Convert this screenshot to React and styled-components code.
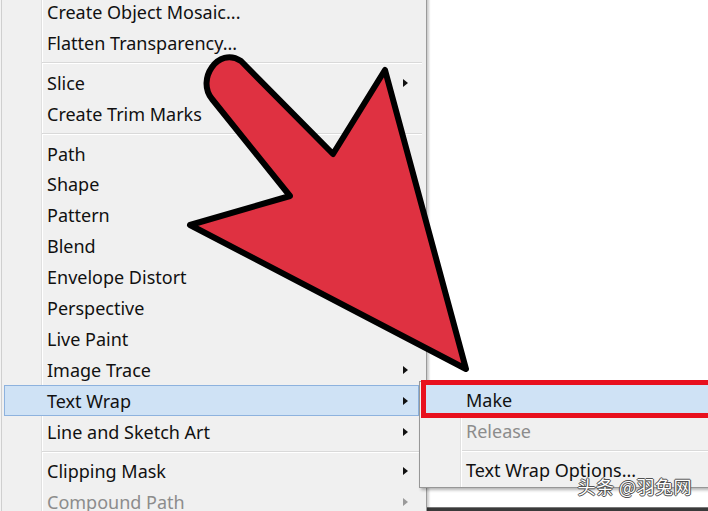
import styled, { createGlobalStyle } from "styled-components";

const GlobalStyle = createGlobalStyle`
    html, body {
        margin: 0;
        padding: 0;
        background: #ffffff;
        overflow: hidden;
    }
    * {
        box-sizing: border-box;
    }
`

const Page = styled.div`
    position: relative;
    width: 708px;
    height: 511px;
    display: flex;
    overflow: hidden;
    background: #f3f3f3;
    font-family: "Segoe UI", "Noto Sans", sans-serif;
`

const Menu = styled.div`
    flex: none;
    width: 426px;
    margin-left: 1px;
    margin-top: -3.45px;
    display: flex;
    flex-direction: column;
    background-color: #f0f0f0;
    background-image: linear-gradient(to right, transparent 39px, #e0e0e0 39px, #e0e0e0 40px, #ffffff 40px, #ffffff 41px, transparent 41px);
    border-left: 1px solid #cfcfcf;
    border-right: 1px solid #9a9a9a;
    box-shadow: 2px 0 2px rgba(0, 0, 0, 0.2);
    z-index: 1;
`

const Item = styled.div`
    flex: none;
    height: 30.9px;
    margin: 0 7px 0 2px;
    padding: 0 10px 0 42px;
    display: flex;
    align-items: center;
    font-size: 18px;
    color: ${props => props.disabled ? "#8c8c8c" : "#111"};
    border: 1px solid ${props => props.active ? "#8db2de" : "transparent"};
    background: ${props => props.active ? "#cfe2f5" : "transparent"};
    white-space: nowrap;
`

const Label = styled.span`
    flex: 1;
`

const Caret = styled.span`
    width: 0;
    height: 0;
    border-top: 4.5px solid transparent;
    border-bottom: 4.5px solid transparent;
    border-left: 5px solid ${props => props.disabled ? "#9a9a9a" : "#111"};
`

const Separator = styled.div`
    flex: none;
    height: 9px;
    margin-left: 40px;
    margin-right: 4px;
    display: flex;
    align-items: center;
    &::before {
        content: "";
        display: block;
        width: 100%;
        height: 1px;
        background: #d9d9d9;
        box-shadow: 0 1px 0 #ffffff;
    }
`

const Canvas = styled.div`
    flex: 1;
    display: flex;
    flex-direction: column;
    justify-content: flex-end;
    background: #ffffff;
`

const BottomBar = styled.div`
    height: 4px;
    background: #3a3a3a;
    border-top: 1px solid #777;
`

const SubMenu = styled.div`
    position: absolute;
    left: 419px;
    top: 381px;
    width: 320px;
    padding: 2px 0;
    display: flex;
    flex-direction: column;
    background-color: #f0f0f0;
    background-image: linear-gradient(to right, transparent 40px, #e0e0e0 40px, #e0e0e0 41px, #ffffff 41px, #ffffff 42px, transparent 42px);
    border: 1px solid #979797;
    box-shadow: 2px 2px 3px rgba(0, 0, 0, 0.3);
    z-index: 2;
`

const SubItem = styled(Item)`
    position: relative;
    height: 31px;
    margin: 0 0 0 4px;
    padding-left: 41px;
    &::after {
        content: "";
        display: ${props => props.boxed ? "block" : "none"};
        position: absolute;
        left: -4px;
        right: 0;
        top: -5px;
        bottom: -4px;
        border: 5px solid #e8101e;
    }
`

const SubSeparator = styled(Separator)`
    height: 8px;
    margin-left: 42px;
    margin-right: 0;
`

const Arrow = styled.svg`
    position: absolute;
    left: 0;
    top: 0;
    z-index: 3;
    pointer-events: none;
`

const Watermark = styled.div`
    position: absolute;
    right: 16px;
    bottom: 12px;
    z-index: 4;
    font-family: "Noto Sans CJK SC", "Noto Sans", sans-serif;
    font-size: 18px;
    letter-spacing: 0.5px;
    color: #ffffff;
    text-shadow: 0 0 1px #333, 1px 0 0 #555, -1px 0 0 #555, 0 1px 0 #555, 0 -1px 0 #555;
`

const items = [
    { label: "Create Object Mosaic..." },
    { label: "Flatten Transparency..." },
    { sep: true },
    { label: "Slice", sub: true },
    { label: "Create Trim Marks" },
    { sep: true },
    { label: "Path" },
    { label: "Shape" },
    { label: "Pattern" },
    { label: "Blend" },
    { label: "Envelope Distort" },
    { label: "Perspective" },
    { label: "Live Paint" },
    { label: "Image Trace", sub: true },
    { label: "Text Wrap", sub: true, active: true },
    { label: "Line and Sketch Art", sub: true },
    { sep: true },
    { label: "Clipping Mask", sub: true },
    { label: "Compound Path", sub: true, disabled: true },
]

function App() {
    return (
        <>
            <GlobalStyle />
            <Page>
                <Menu>
                    {items.map((it, i) => it.sep ? (
                        <Separator key={i} />
                    ) : (
                        <Item key={i} active={it.active} disabled={it.disabled}>
                            <Label>{it.label}</Label>
                            {it.sub && <Caret disabled={it.disabled} />}
                        </Item>
                    ))}
                </Menu>
                <Canvas>
                    <BottomBar />
                </Canvas>

                <SubMenu>
                    <SubItem active boxed>
                        <Label>Make</Label>
                    </SubItem>
                    <SubItem disabled>
                        <Label>Release</Label>
                    </SubItem>
                    <SubSeparator />
                    <SubItem>
                        <Label>Text Wrap Options...</Label>
                    </SubItem>
                </SubMenu>

                <Arrow width="708" height="511" viewBox="0 0 708 511">
                    <path
                        d="M 241 61 L 333 154 L 385 70 L 466 369 L 190 225 L 290 196 L 212 99 C 196 80 218 46 241 61 Z"
                        fill="#df3141"
                        stroke="#000"
                        strokeWidth="6"
                        strokeLinejoin="round"
                    />
                </Arrow>

                <Watermark>头条 @羽兔网</Watermark>
            </Page>
        </>
    );
}

export default App;
